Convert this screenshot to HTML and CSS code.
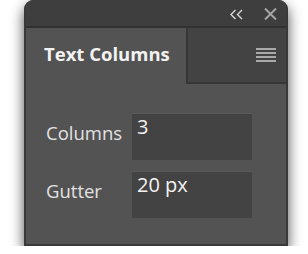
FILE: index.html
```html
<!DOCTYPE html>
<html lang="en">
    <head>
        <meta charset="UTF-8" />
        <meta name="viewport" content="width=device-width, initial-scale=1.0" />
        <title>Text Columns</title>
        <link rel="stylesheet" href="styles.css">
    </head>
    <body>
        <div class="panel">
            <div class="titlebar">
                <svg class="collapse" width="13" height="11" viewBox="0 0 13 11">
                    <path d="M5.5 1 L1 5.5 L5.5 10 M12 1 L7.5 5.5 L12 10" fill="none" stroke="#d8d8d8" stroke-width="1.4" />
                </svg>
                <svg class="close" width="13" height="12" viewBox="0 0 13 12">
                    <path d="M1 0.5 L12 11.5 M12 0.5 L1 11.5" fill="none" stroke="#a6a6a6" stroke-width="2" />
                </svg>
            </div>

            <div class="head">
                <div class="tab">Text Columns</div>
                <div class="rest">
                    <div class="menu">
                        <span></span>
                        <span></span>
                        <span></span>
                        <span></span>
                    </div>
                </div>
            </div>

            <div class="form">
                <label class="label">Columns</label>
                <div class="field">3</div>

                <label class="label">Gutter</label>
                <div class="field">20 px</div>
            </div>
        </div>
    </body>
</html>
```

FILE: styles.css
```css
body {
    margin: 0;
    background: #ffffff;
    font-family: "Open Sans", "Noto Sans", sans-serif;
}

.panel {
    margin-left: 24px;
    width: 264px;
    height: 246px;
    box-sizing: border-box;
    background: #535353;
    border: 2px solid #393939;
    border-top: none;
    border-radius: 9px 9px 0 0;
    box-shadow: 0 6px 14px rgba(0, 0, 0, 0.7);
    overflow: hidden;
}

.titlebar {
    height: 26px;
    background: #3e3e3e;
    border-bottom: 2px solid #313131;
    display: flex;
    justify-content: flex-end;
    align-items: center;
    gap: 21px;
    padding-right: 9px;
}

.collapse {
    margin-top: 2px;
}

.close {
    margin-top: 2px;
}

.head {
    height: 56px;
    display: flex;
}

.tab {
    width: 160px;
    background: #535353;
    color: #f2f2f2;
    font-size: 18.5px;
    font-weight: bold;
    padding-left: 18px;
    padding-top: 13px;
    box-sizing: border-box;
}

.rest {
    flex: 1;
    background: #434343;
    border-left: 2px solid #363636;
    border-bottom: 2px solid #363636;
    display: flex;
    justify-content: flex-end;
    align-items: center;
    padding-right: 10px;
}

.menu {
    display: flex;
    flex-direction: column;
    gap: 2px;
}

.menu span {
    width: 20px;
    height: 2px;
    background: #a9a9a9;
}

.form {
    display: grid;
    grid-template-columns: 86px 120px;
    grid-auto-rows: 47px;
    row-gap: 11px;
    padding-top: 29px;
    padding-left: 20px;
}

.label {
    color: #e2e2e2;
    font-size: 18.5px;
    line-height: 22px;
    padding-top: 9px;
}

.field {
    background: #434343;
    border-top: 1px solid #5a5a5a;
    color: #f4f4f4;
    font-size: 20px;
    line-height: 22px;
    padding-top: 2px;
    padding-left: 5px;
}
```
